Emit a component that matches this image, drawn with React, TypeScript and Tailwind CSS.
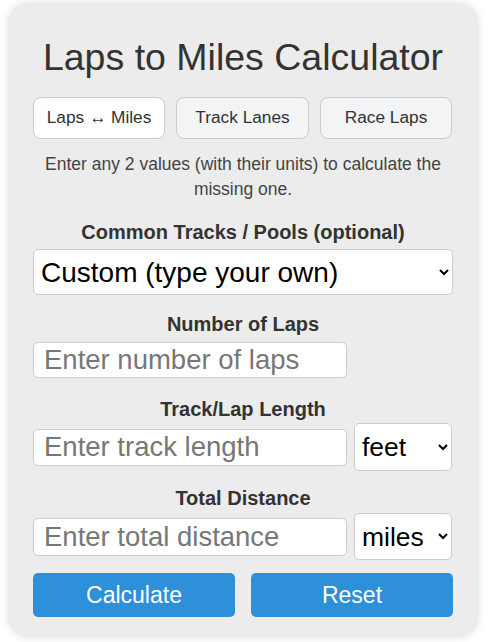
const App = () => {
  return (
    <div className="min-h-screen bg-white pt-[3px] pl-2 pr-[19px] font-['Liberation_Sans',Arial,sans-serif]">
      <div className="w-[470px] rounded-[20px] bg-[#ebeceb] px-[25px] pt-[32px] pb-[20px] shadow-[0_0_10px_rgba(0,0,0,0.12)]">
        <h1 className="text-center text-[37.5px] leading-[44px] text-[#333]">Laps to Miles Calculator</h1>

        <div className="mt-[18px] flex gap-[11px]">
          <button className="h-[42px] w-[132px] rounded-[8px] border border-[#ccc] bg-white text-[17.3px] text-[#333]">
            Laps ↔ Miles
          </button>
          <button className="h-[42px] w-[133px] rounded-[8px] border border-[#ccc] bg-[#f3f4f6] text-[17.3px] text-[#333]">
            Track Lanes
          </button>
          <button className="h-[42px] w-[132px] rounded-[8px] border border-[#ccc] bg-[#f3f4f6] text-[17.3px] text-[#333]">
            Race Laps
          </button>
        </div>

        <p className="mt-[13px] text-center text-[17.5px] leading-[25px] text-[#444]">
          Enter any 2 values (with their units) to calculate the missing one.
        </p>

        <div className="mt-[18px] text-center text-[20px] font-bold leading-[24px] text-[#333]">
          Common Tracks / Pools (optional)
        </div>
        <select className="mt-[5px] h-[46px] w-full rounded-[5px] border border-[#ccc] bg-white px-[3px] text-[28px] text-black">
          <option>Custom (type your own)</option>
        </select>

        <div className="mt-[17px] text-center text-[20px] font-bold leading-[24px] text-[#333]">Number of Laps</div>
        <input
          className="mt-[6px] block h-[36px] w-[314px] rounded-[5px] border border-[#ccc] bg-white px-[10px] text-[27.5px] placeholder:text-[#777]"
          placeholder="Enter number of laps"
        />

        <div className="mt-[19px] text-center text-[20px] font-bold leading-[24px] text-[#333]">Track/Lap Length</div>
        <div className="mt-[2px] flex items-center gap-[7px]">
          <input
            className="block h-[37px] w-[314px] rounded-[5px] border border-[#ccc] bg-white px-[10px] text-[27.5px] placeholder:text-[#777]"
            placeholder="Enter track length"
          />
          <select className="h-[48px] w-[98px] rounded-[5px] border border-[#ccc] bg-white px-[3px] text-[26.5px] text-black">
            <option>feet</option>
          </select>
        </div>

        <div className="mt-[15px] text-center text-[20px] font-bold leading-[24px] text-[#333]">Total Distance</div>
        <div className="mt-[3px] flex items-center gap-[7px]">
          <input
            className="block h-[38px] w-[314px] rounded-[5px] border border-[#ccc] bg-white px-[10px] text-[27.5px] placeholder:text-[#777]"
            placeholder="Enter total distance"
          />
          <select className="h-[47px] w-[98px] rounded-[5px] border border-[#ccc] bg-white px-[3px] text-[26.5px] text-black">
            <option>miles</option>
          </select>
        </div>

        <div className="mt-[13px] flex gap-[16px]">
          <button className="h-[44px] w-[202px] rounded-[5px] bg-[#2e90d8] text-[23px] text-white">Calculate</button>
          <button className="h-[44px] w-[202px] rounded-[5px] bg-[#2e90d8] text-[23px] text-white">Reset</button>
        </div>
      </div>
    </div>
  );
};

export default App;
